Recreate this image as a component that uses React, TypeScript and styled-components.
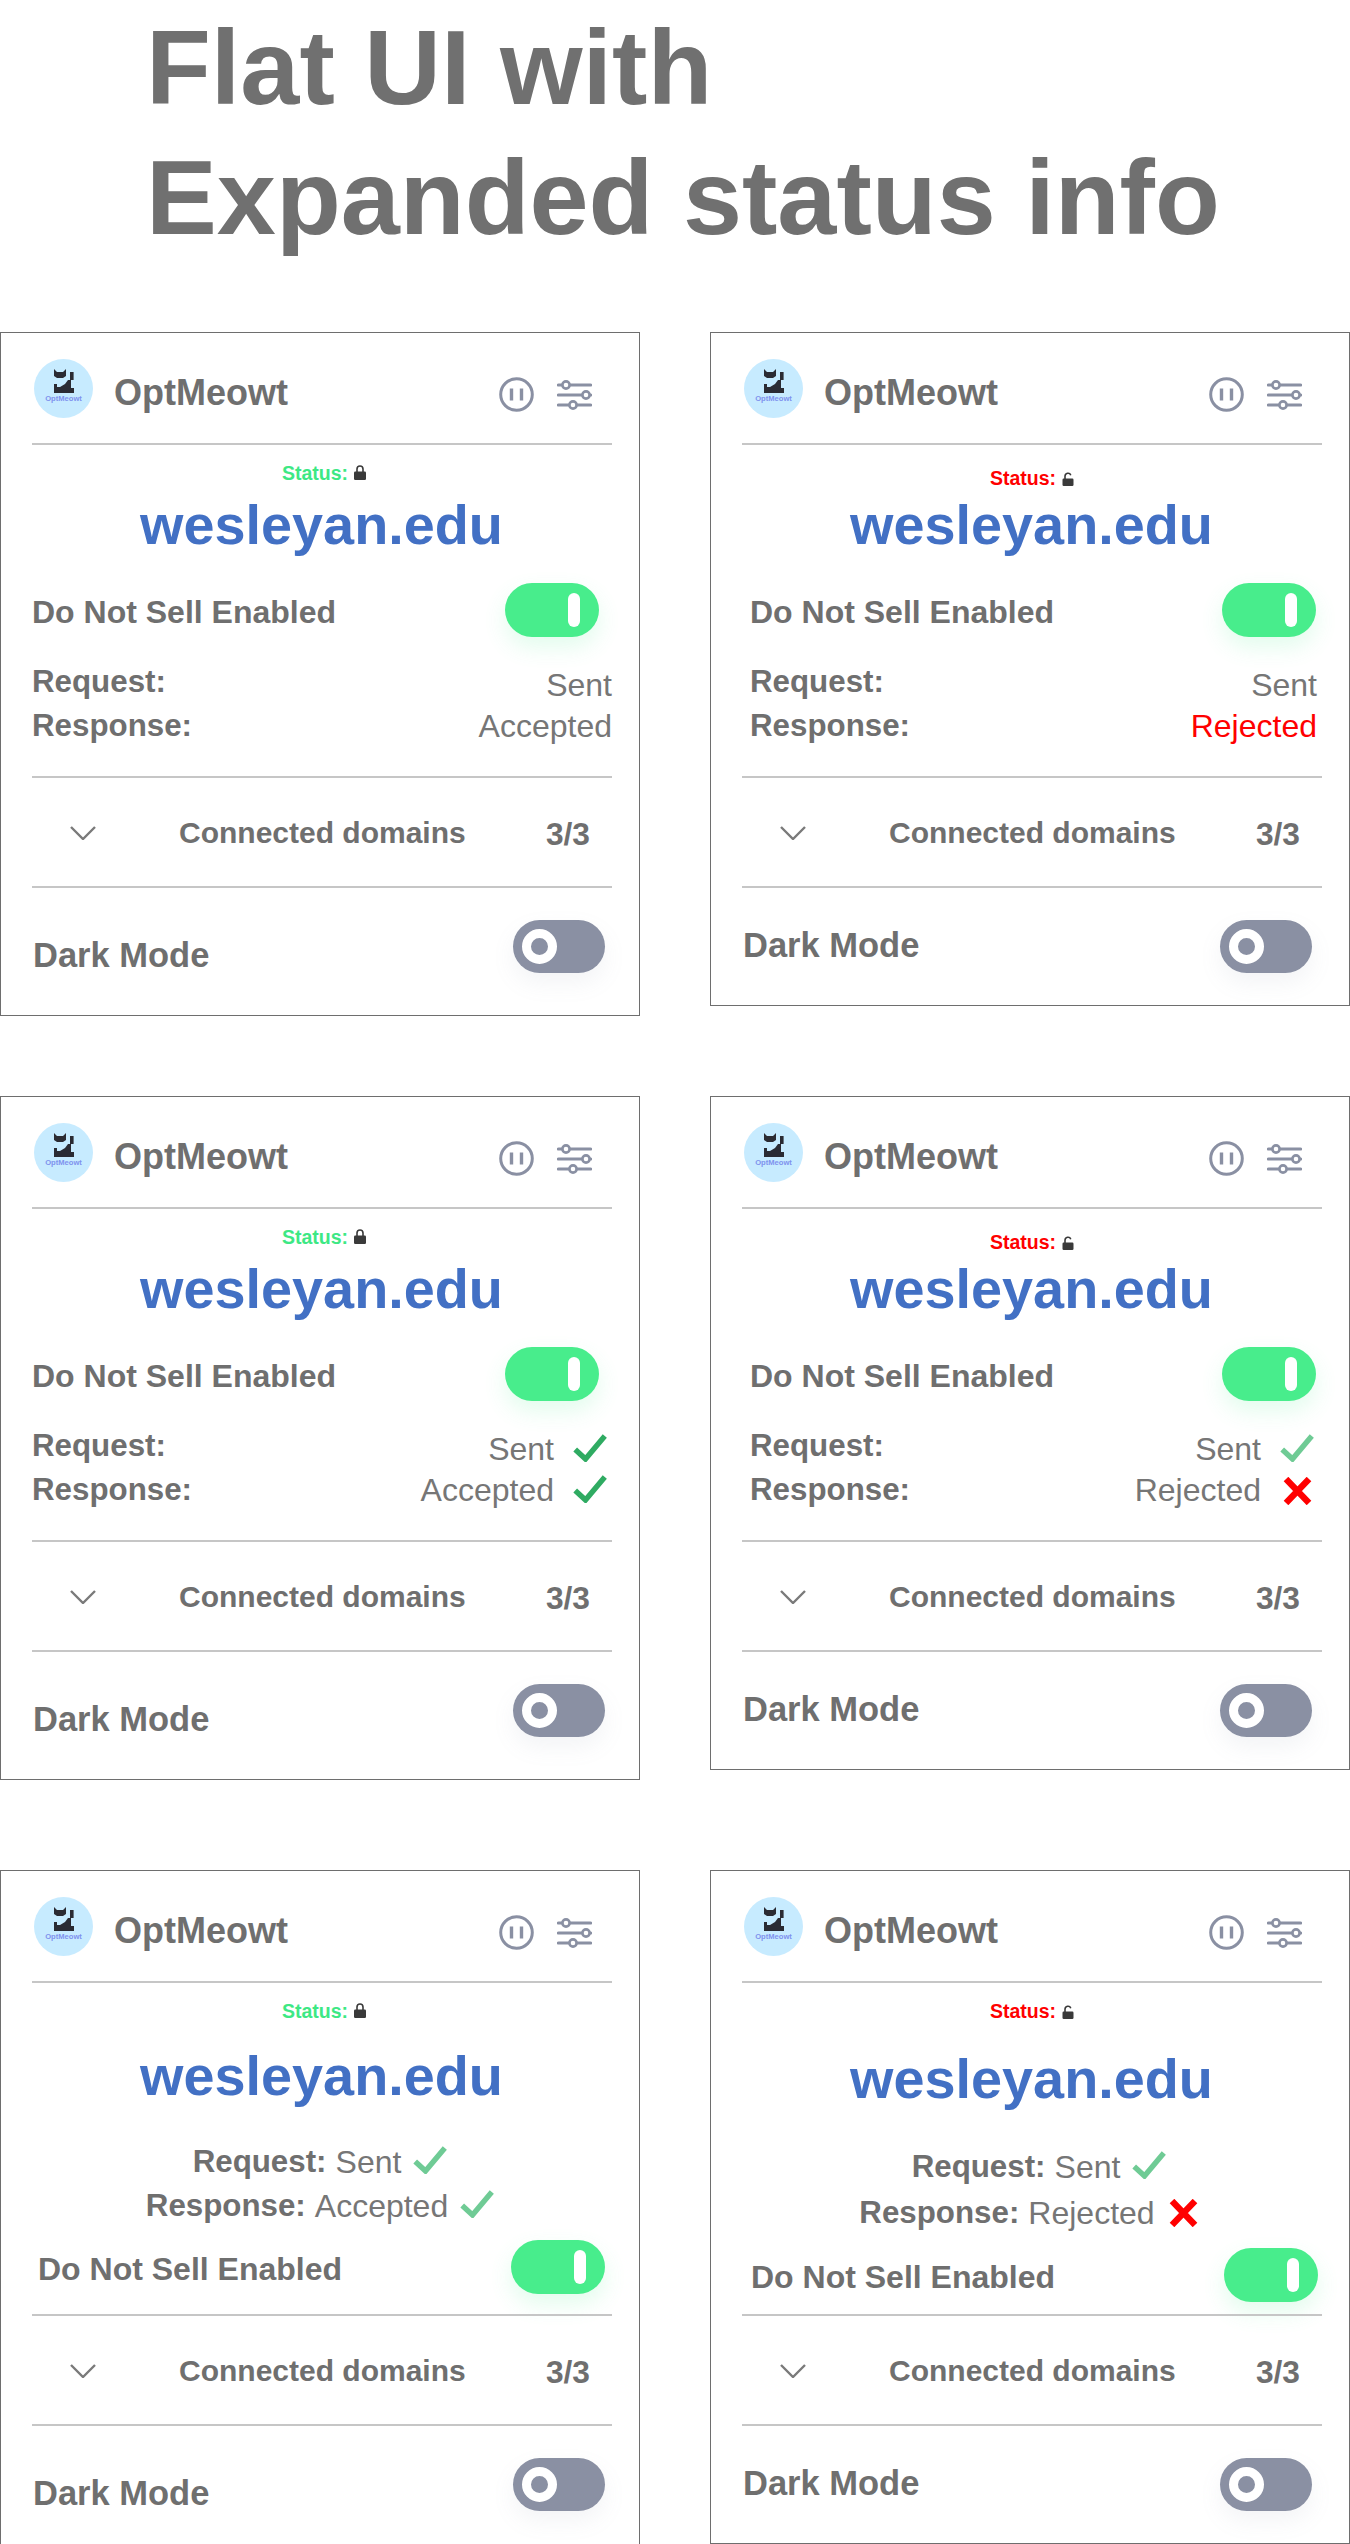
import * as React from 'react';
import styled, { createGlobalStyle } from 'styled-components';

type Side = 'left' | 'right';
type Tone = 'dark' | 'light' | 'none';

const GREY = '#6f6f6f';
const SLATE = '#8a90a3';
const FONT = '"Liberation Sans", Arial, sans-serif';

const GlobalStyle = createGlobalStyle`
	html, body {
		margin: 0;
		padding: 0;
		background: #fff;
	}
`;

const Page = styled.main`
	width: 1350px;
	height: 2544px;
	overflow: hidden;
	font-family: ${FONT};
	color: ${GREY};
`;

const Title = styled.h1`
	box-sizing: border-box;
	height: 332px;
	margin: 0;
	padding: 3px 0 0 146px;
	font-size: 106.2px;
	line-height: 130px;
	font-weight: 700;
	color: #707070;
`;

const Grid = styled.div`
	display: grid;
	grid-template-columns: 640px 640px;
	grid-template-rows: 764px 774px 684px;
	column-gap: 70px;
	align-items: start;
`;

const Card = styled.article<{ $side: Side }>`
	box-sizing: border-box;
	height: ${(p) => (p.$side === 'left' ? 684 : 674)}px;
	box-shadow: inset 0 0 0 1px #6e6e6e;
	background: #fff;
	display: flex;
	flex-direction: column;
`;

const Header = styled.header`
	box-sizing: border-box;
	height: 111px;
	padding: 27px 48px 0 34px;
	display: flex;
	align-items: flex-start;
`;

const LogoBadge = styled.svg`
	width: 59px;
	height: 59px;
	flex: none;
`;

const Name = styled.span`
	margin-left: 21px;
	padding-top: 4px;
	font-size: 36px;
	line-height: 60px;
	font-weight: 700;
`;

const Actions = styled.div`
	margin-left: auto;
	margin-top: 18px;
	height: 35px;
	display: flex;
	align-items: center;
	gap: 23px;
`;

const Rule = styled.hr<{ $space?: number }>`
	flex: none;
	height: 2px;
	border: 0;
	background: #c6c6c6;
	margin: ${(p) => p.$space ?? 0}px 28px 0 32px;
`;

const StatusRow = styled.div<{ $side: Side; $stacked?: boolean }>`
	box-sizing: border-box;
	height: 47px;
	padding-top: ${(p) => (p.$side === 'left' || p.$stacked ? 17 : 22)}px;
	padding-left: ${(p) => (p.$side === 'left' ? 8 : 4)}px;
	display: flex;
	justify-content: center;
	align-items: flex-start;
	gap: 6px;
`;

const StatusText = styled.span<{ $safe: boolean }>`
	font-size: 19.5px;
	line-height: 22px;
	font-weight: 700;
	color: ${(p) => (p.$safe ? '#3de884' : '#ff0000')};
`;

const Domain = styled.div<{ $side: Side; $stacked?: boolean }>`
	box-sizing: border-box;
	height: 64px;
	margin-top: ${(p) => (p.$stacked ? (p.$side === 'left' ? 13 : 16) : 0)}px;
	padding: 1px 0 0 3px;
	font-size: 55.8px;
	line-height: 64px;
	font-weight: 700;
	text-align: center;
	color: #4270c4;
`;

const pads = {
	plain: { left: [32, 28], right: [40, 33] },
	marked: { left: [32, 33], right: [40, 36] },
};

const SwitchRow = styled.div<{ $side: Side; $stacked?: boolean }>`
	height: 54px;
	display: flex;
	justify-content: space-between;
	align-items: center;
	margin-top: ${(p) => (p.$stacked ? (p.$side === 'left' ? 12 : 13) : 27)}px;
	padding: ${(p) =>
		p.$stacked
			? p.$side === 'left' ? '0 35px 0 38px' : '0 32px 0 41px'
			: p.$side === 'left' ? '0 41px 0 32px' : '0 34px 0 40px'};
`;

const SwitchLabel = styled.span`
	padding-top: 4px;
	font-size: 32px;
	line-height: 50px;
	font-weight: 700;
`;

const Toggle = styled.div<{ $on: boolean }>`
	box-sizing: border-box;
	flex: none;
	display: flex;
	align-items: center;
	justify-content: ${(p) => (p.$on ? 'flex-end' : 'flex-start')};
	width: ${(p) => (p.$on ? 94 : 92)}px;
	height: ${(p) => (p.$on ? 54 : 53)}px;
	padding: ${(p) => (p.$on ? '0 19px 0 0' : '0 0 0 9px')};
	border-radius: 27px;
	background: ${(p) => (p.$on ? '#48ed8c' : SLATE)};
	box-shadow: ${(p) => (p.$on ? '0 10px 22px rgba(72, 237, 140, 0.16)' : '0 10px 22px rgba(138, 144, 163, 0.1)')};
`;

const OnKnob = styled.span`
	width: 12px;
	height: 34px;
	border-radius: 6px;
	background: #fff;
`;

const OffKnob = styled.span`
	box-sizing: border-box;
	width: 35px;
	height: 35px;
	border-radius: 50%;
	border: 9.5px solid #fff;
	background: ${SLATE};
`;

const Details = styled.div<{ $side: Side; $stacked?: boolean; $marked?: boolean }>`
	display: flex;
	flex-direction: column;
	gap: ${(p) => (p.$stacked && p.$side === 'right' ? 2 : 0)}px;
	margin-top: ${(p) => (p.$stacked ? (p.$side === 'left' ? 33 : 35) : 23)}px;
	padding: ${(p) => {
		if (p.$stacked) return '0';
		const [l, r] = pads[p.$marked ? 'marked' : 'plain'][p.$side];
		return `0 ${r}px 0 ${l}px`;
	}};
`;

const DetailLine = styled.div<{ $stacked?: boolean; $shift?: number }>`
	height: 44px;
	display: flex;
	align-items: flex-start;
	justify-content: ${(p) => (p.$stacked ? 'center' : 'space-between')};
	padding-left: ${(p) => p.$shift ?? 0}px;
	font-size: 31.3px;
	line-height: 44px;
`;

const Key = styled.b`
	font-weight: 700;
`;

const ValueGroup = styled.div<{ $stacked?: boolean }>`
	display: flex;
	align-items: flex-start;
	margin-left: ${(p) => (p.$stacked ? 9 : 0)}px;
`;

const Value = styled.span<{ $drop?: boolean; $red?: boolean }>`
	padding-top: ${(p) => (p.$drop ? 3 : 0)}px;
	font-size: 32px;
	color: ${(p) => (p.$red ? '#ff0000' : '#767676')};
`;

const MarkBox = styled.span<{ $gap: number; $top: number }>`
	width: 34px;
	height: 28px;
	margin: ${(p) => p.$top}px 0 0 ${(p) => p.$gap}px;
	display: flex;
	justify-content: center;
`;

const ConnectedRow = styled.div`
	box-sizing: border-box;
	height: 108px;
	padding-top: 2px;
	margin: 0 50px 0 70px;
	display: flex;
	align-items: center;
	font-size: 30px;
	font-weight: 700;
`;

const ConnectedLabel = styled.span`
	margin-left: 83px;
`;

const Count = styled.span`
	margin-left: auto;
	padding-top: 2px;
	font-size: 31.7px;
`;

const DarkRow = styled.div<{ $side: Side }>`
	margin-top: 32px;
	display: flex;
	justify-content: space-between;
	align-items: flex-start;
	padding: ${(p) => (p.$side === 'left' ? '0 35px 0 33px' : '0 38px 0 33px')};
`;

const DarkLabel = styled.span<{ $side: Side }>`
	margin-top: ${(p) => (p.$side === 'left' ? 9 : -1)}px;
	font-size: 34.5px;
	line-height: 53px;
	font-weight: 700;
`;

const Logo = () => (
	<LogoBadge viewBox="0 0 59 59">
		<circle cx="29.5" cy="29.5" r="29.5" fill="#c7ebff" />
		<path d="M20 10l3 3h6l3-3v7l-3 2h-6l-3-2z" fill="#2b2b33" />
		<rect x="36" y="13" width="3.6" height="8" fill="#2b2b33" />
		<path d="M20 25h3v3h3l5-3 3-4h3v8h3v5H20z" fill="#2b2b33" />
		<text x="29.5" y="41.5" textAnchor="middle" fontSize="7.6" fontWeight="700" fontFamily={FONT} fill="#7f92ee">
			OptMeowt
		</text>
	</LogoBadge>
);

const PauseIcon = () => (
	<svg width="35" height="35" viewBox="0 0 35 35" fill="none" stroke={SLATE}>
		<circle cx="17.5" cy="17.5" r="15.8" strokeWidth="3" />
		<path d="M12.5 11.5v12M22.5 11.5v12" strokeWidth="3.4" />
	</svg>
);

const SlidersIcon = () => (
	<svg width="35" height="30" viewBox="0 0 35 30" fill="#fff" stroke={SLATE} strokeLinecap="round">
		<path d="M1.5 5h32M1.5 15h32M1.5 25h32" strokeWidth="3.2" />
		<circle cx="9" cy="5" r="3.6" strokeWidth="2.6" />
		<circle cx="29" cy="15" r="3.6" strokeWidth="2.6" />
		<circle cx="16" cy="25" r="3.6" strokeWidth="2.6" />
	</svg>
);

const LockIcon = ({ open }: { open: boolean }) =>
	open ? (
		<svg width="12" height="14" viewBox="0 0 12 14" style={{ marginTop: 5 }}>
			<path d="M3 7V4.2a3 3 0 0 1 5.8-1" fill="none" stroke="#3a3a3a" strokeWidth="1.6" />
			<rect x="0.5" y="6.5" width="11" height="7.5" rx="1.2" fill="#3a3a3a" />
		</svg>
	) : (
		<svg width="12" height="15" viewBox="0 0 12 15" style={{ marginTop: 3 }}>
			<path d="M3 7V4a3 3 0 0 1 6 0v3" fill="none" stroke="#3a3a3a" strokeWidth="1.6" />
			<rect x="0" y="6.5" width="12" height="8.5" rx="1.2" fill="#3a3a3a" />
		</svg>
	);

const Check = ({ tone }: { tone: Tone }) => (
	<svg width="34" height="28" viewBox="0 0 34 28" fill="none">
		<path d="M2.2 15.5L12.5 25 31.8 2" stroke={tone === 'dark' ? '#2fab62' : '#6fcb95'} strokeWidth="5.4" />
	</svg>
);

const Cross = () => (
	<svg width="29" height="28" viewBox="0 0 29 28" fill="none">
		<path d="M3 2l23 24M26 2L3 26" stroke="#ff0000" strokeWidth="6.4" />
	</svg>
);

const Chevron = () => (
	<svg width="26" height="14" viewBox="0 0 26 14" fill="none" style={{ flex: 'none' }}>
		<path d="M1 1l12 12L25 1" stroke="#7a7a7a" strokeWidth="2.4" />
	</svg>
);

const markTop = (stacked?: boolean, drop?: boolean, mark?: 'check' | 'cross') => {
	if (mark === 'cross') return stacked ? 8 : 9;
	if (stacked) return 6;
	return drop ? 10 : 7;
};

const Line = ({ name, value, drop, red, mark, tone, stacked, shift }: {
	name: string;
	value: string;
	drop?: boolean;
	red?: boolean;
	mark?: 'check' | 'cross';
	tone?: Tone;
	stacked?: boolean;
	shift?: number;
}) => (
	<DetailLine $stacked={stacked} $shift={shift}>
		<Key>{name}</Key>
		<ValueGroup $stacked={stacked}>
			<Value $drop={drop} $red={red}>{value}</Value>
			{mark && (
				<MarkBox $gap={stacked ? 12 : 19} $top={markTop(stacked, drop, mark)}>
					{mark === 'check' ? <Check tone={tone ?? 'light'} /> : <Cross />}
				</MarkBox>
			)}
		</ValueGroup>
	</DetailLine>
);

const Panel = ({ side, tone = 'none', stacked = false }: { side: Side; tone?: Tone; stacked?: boolean }) => {
	const safe = side === 'left';
	const marked = tone !== 'none';
	const details = (
		<Details $side={side} $stacked={stacked} $marked={marked}>
			<Line
				name="Request:"
				value="Sent"
				drop={!stacked}
				mark={marked ? 'check' : undefined}
				tone={tone}
				stacked={stacked}
				shift={stacked && !safe ? 18 : 0}
			/>
			<Line
				name="Response:"
				value={safe ? 'Accepted' : 'Rejected'}
				red={!safe && !marked}
				mark={marked ? (safe ? 'check' : 'cross') : undefined}
				tone={tone}
				stacked={stacked}
			/>
		</Details>
	);

	return (
		<Card $side={side}>
			<Header>
				<Logo />
				<Name>OptMeowt</Name>
				<Actions>
					<PauseIcon />
					<SlidersIcon />
				</Actions>
			</Header>
			<Rule />
			<StatusRow $side={side} $stacked={stacked}>
				<StatusText $safe={safe}>Status:</StatusText>
				<LockIcon open={!safe} />
			</StatusRow>
			<Domain $side={side} $stacked={stacked}>wesleyan.edu</Domain>
			{stacked && details}
			<SwitchRow $side={side} $stacked={stacked}>
				<SwitchLabel>Do Not Sell Enabled</SwitchLabel>
				<Toggle $on={true}><OnKnob /></Toggle>
			</SwitchRow>
			{!stacked && details}
			<Rule $space={stacked ? (safe ? 20 : 12) : 28} />
			<ConnectedRow>
				<Chevron />
				<ConnectedLabel>Connected domains</ConnectedLabel>
				<Count>3/3</Count>
			</ConnectedRow>
			<Rule />
			<DarkRow $side={side}>
				<DarkLabel $side={side}>Dark Mode</DarkLabel>
				<Toggle $on={false}><OffKnob /></Toggle>
			</DarkRow>
		</Card>
	);
};

export default function App() {
	return (
		<Page>
			<GlobalStyle />
			<Title>
				Flat UI with
				<br />
				Expanded status info
			</Title>
			<Grid>
				<Panel side="left" />
				<Panel side="right" />
				<Panel side="left" tone="dark" />
				<Panel side="right" tone="light" />
				<Panel side="left" tone="light" stacked />
				<Panel side="right" tone="light" stacked />
			</Grid>
		</Page>
	);
}
